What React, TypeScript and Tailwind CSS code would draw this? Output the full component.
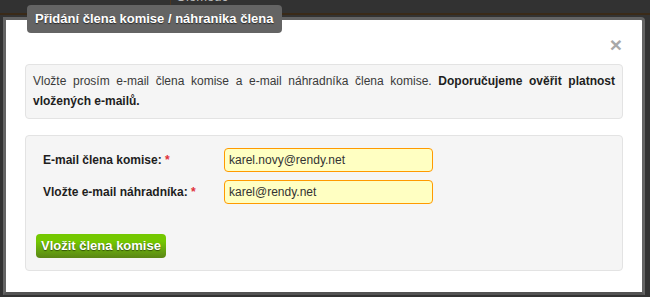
export default function App() {
  return (
    <div className="relative h-[297px] w-[650px] overflow-hidden bg-[#333333] font-['Liberation_Sans',Arial,sans-serif]">
      {/* page behind the dialog */}
      <div className="absolute left-0 top-0 h-[15px] w-full border-b-2 border-[#3a2a18] bg-[#323232]" />
      <div className="absolute left-[170px] top-0 h-[15px] w-[1px] bg-[#4a3520]" />
      <div className="absolute left-[176px] top-[-11px] text-[13px] leading-[16px] text-[#bbbbbb]">Olomouc</div>

      {/* dialog */}
      <div className="ml-[3px] mt-[17px] h-[278px] w-[642px] rounded-tr-[4px] border-[3px] border-[#646464] border-b-[#545454] bg-white px-[19px]">
        <div className="flex h-[44px] justify-end pr-[1px] pt-[19px]">
          <span className="text-[21px] font-bold leading-[12px] text-[#a8a8a8]">×</span>
        </div>

        {/* info */}
        <div className="h-[55px] rounded-[4px] border border-[#e3e3e3] bg-[#f5f5f5] px-[7px] pt-[6px] text-justify text-[12px] leading-[20px] text-[#3a3a3a]">
          Vložte prosím e-mail člena komise a e-mail náhradníka člena komise.{" "}
          <b className="text-[#1e1e1e]">Doporučujeme ověřit platnost vložených e-mailů.</b>
        </div>

        {/* form */}
        <div className="mt-[16px] h-[136px] rounded-[4px] border border-[#e3e3e3] bg-[#f5f5f5] px-[10px] pt-[12px]">
          <div className="flex flex-col gap-[8px]">
            <div className="flex items-center">
              <div className="w-[188px] pl-[7px] text-[12px] font-bold text-[#1e1e1e]">
                E-mail člena komise: <span className="text-[#e0303a]">*</span>
              </div>
              <div className="flex h-[24px] w-[209px] items-center rounded-[4px] border border-[#ff9a00] bg-[#ffffc2] px-[4px] text-[12px] text-[#333]">
                karel.novy@rendy.net
              </div>
            </div>
            <div className="flex items-center">
              <div className="w-[188px] pl-[7px] text-[12px] font-bold text-[#1e1e1e]">
                Vložte e-mail náhradníka: <span className="text-[#e0303a]">*</span>
              </div>
              <div className="flex h-[24px] w-[209px] items-center rounded-[4px] border border-[#ff9a00] bg-[#ffffc2] px-[4px] text-[12px] text-[#333]">
                karel@rendy.net
              </div>
            </div>
          </div>
          <button className="mt-[30px] flex h-[24px] items-center rounded-[4px] bg-linear-to-b from-[#74c800] from-30% to-[#5a8614] px-[5px] text-[13px] font-bold text-white [text-shadow:0_1px_1px_rgba(0,0,0,0.5)]">
            Vložit člena komise
          </button>
        </div>
      </div>

      {/* title tab */}
      <div className="absolute left-[27px] top-[5px] flex h-[28px] w-[255px] items-center rounded-[4px] bg-[#646464] pl-[8px] text-[13px] font-bold text-white [text-shadow:0_1px_1px_rgba(0,0,0,0.6)]">
        Přidání člena komise / náhranika člena
      </div>
    </div>
  );
}
